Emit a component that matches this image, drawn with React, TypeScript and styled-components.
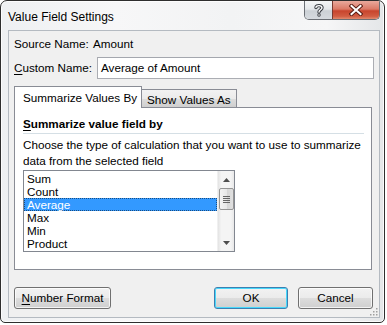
import React from "react";
import styled, { createGlobalStyle, css } from "styled-components";

const Global = createGlobalStyle`
  html, body { margin: 0; padding: 0; background: #ffffff; }
  body { font-family: "Liberation Sans", Arial, sans-serif; font-size: 11.7px; color: #000; }
  * { box-sizing: border-box; }
`;

const Window = styled.div`
  width: 385px;
  height: 323px;
  border: 1px solid #2e2e2e;
  border-radius: 7px 7px 5px 5px;
  background: linear-gradient(90deg, #eef0f2 0%, #f7f7f8 30%, #f2f3f4 60%, #f6f6f7 85%, #e4e6e8 100%);
  display: flex;
  flex-direction: column;
  overflow: hidden;
  box-shadow: inset 0 0 0 1px rgba(255, 255, 255, 0.8);
`;

const TitleBar = styled.div`
  height: 29px;
  display: flex;
  align-items: flex-start;
  padding-left: 7px;
  padding-right: 4px;
`;

const Title = styled.div`
  flex: 1;
  font-family: "Liberation Sans", Arial, sans-serif;
  font-size: 12px;
  line-height: 16px;
  margin-top: 8px;
  color: #000;
  text-shadow: 0 0 6px rgba(255, 255, 255, 0.9);
`;

const CaptionButtons = styled.div`
  display: flex;
  border: 1px solid #6b6f75;
  border-top: none;
  border-radius: 0 0 5px 5px;
  overflow: hidden;
  height: 19px;
`;

const CaptionButton = styled.div<{ $close?: boolean }>`
  height: 18px;
  display: flex;
  align-items: center;
  justify-content: center;
  ${(p) =>
    p.$close
      ? css`
          width: 47px;
          border-left: 1px solid #7a3a30;
          background: linear-gradient(180deg, #e9a99c 0%, #db7a67 45%, #c8442d 55%, #d15d42 85%, #e28a6e 100%);
        `
      : css`
          width: 27px;
          background: linear-gradient(180deg, #f4f5f6 0%, #e4e7ea 45%, #ccd1d6 55%, #d6dadf 100%);
        `}
`;

const Client = styled.div`
  margin-left: 7px;
  width: 372px;
  height: 288px;
  background: #f0f0f0;
  border: 1px solid #b4bac1;
  padding: 5px 0 0 5px;
  display: flex;
  flex-direction: column;
  position: relative;
`;

const Row = styled.div<{ $height: number; $mt?: number }>`
  display: flex;
  align-items: center;
  height: ${(p) => p.$height}px;
  margin-top: ${(p) => p.$mt ?? 0}px;
`;

const Label = styled.div<{ $w: number }>`
  width: ${(p) => p.$w}px;
  line-height: 16px;
  white-space: nowrap;
`;

const Value = styled.div`
  line-height: 16px;
`;

const Mnemonic = styled.span`
  text-decoration: underline;
  text-underline-offset: 2px;
`;

const Input = styled.div`
  width: 277px;
  height: 22px;
  border: 1px solid #abadb3;
  border-top-color: #a4a7ae;
  background: #fff;
  padding: 0 3px;
  line-height: 20px;
`;

const TabStrip = styled.div`
  display: flex;
  align-items: flex-end;
  height: 21px;
  margin-top: 7px;
`;

const Tab = styled.div<{ $active?: boolean }>`
  border: 1px solid #898c95;
  border-bottom: none;
  white-space: nowrap;
  ${(p) =>
    p.$active
      ? css`
          width: 128px;
          height: 22px;
          margin-bottom: -1px;
          background: #fff;
          padding: 4px 0 0 8px;
          position: relative;
          z-index: 1;
          line-height: 14px;
        `
      : css`
          width: 96px;
          height: 18px;
          margin-left: -1px;
          border-left: none;
          background: linear-gradient(180deg, #f2f2f2 0%, #ebebeb 50%, #dddddd 51%, #cfcfcf 100%);
          padding: 2px 0 0 6px;
          line-height: 15px;
        `}
`;

const Panel = styled.div`
  width: 358px;
  height: 163px;
  background: #fff;
  border: 1px solid #898c95;
  padding: 8px 6px 0 8px;
  display: flex;
  flex-direction: column;
`;

const Heading = styled.div`
  font-weight: bold;
  line-height: 16px;
  padding-bottom: 1px;
  border-bottom: 1px solid #d5dfe5;
  width: 341px;
`;

const Description = styled.div`
  margin-top: 3px;
  line-height: 16px;
  white-space: nowrap;
`;

const ListBox = styled.div`
  margin-top: 1px;
  width: 212px;
  height: 82px;
  border: 1px solid #828790;
  background: #fff;
  display: flex;
`;

const Items = styled.div`
  flex: 1;
  padding-top: 1px;
`;

const Item = styled.div<{ $selected?: boolean }>`
  height: 13px;
  line-height: 12px;
  padding-left: 2px;
  border: 1px solid transparent;
  ${(p) =>
    p.$selected &&
    css`
      background: #3399ff;
      color: #fff;
      border: 1px dotted #1a4d80;
    `}
`;

const ScrollBar = styled.div`
  width: 17px;
  background: linear-gradient(90deg, #e3e3e3 0%, #f4f4f4 20%, #f4f4f4 80%, #e8e8e8 100%);
  display: flex;
  flex-direction: column;
  align-items: center;
  border-left: 1px solid #f0f0f0;
`;

const Arrow = styled.div`
  height: 17px;
  width: 17px;
  display: flex;
  align-items: center;
  justify-content: center;
`;

const Thumb = styled.div`
  width: 15px;
  height: 22px;
  border: 1px solid #959595;
  border-radius: 2px;
  background: linear-gradient(90deg, #f3f3f3 0%, #e8e8e8 50%, #d6d6d6 51%, #e0e0e0 100%);
  display: flex;
  flex-direction: column;
  align-items: center;
  justify-content: center;
  gap: 1px;
`;

const Grip = styled.div`
  width: 7px;
  height: 1px;
  background: #666;
`;

const Track = styled.div`
  flex: 1;
`;

const ButtonRow = styled.div`
  display: flex;
  margin-top: 17px;
  height: 22px;
`;

const Button = styled.div<{ $w: number; $default?: boolean; $ml?: number }>`
  width: ${(p) => p.$w}px;
  height: 22px;
  margin-left: ${(p) => p.$ml ?? 0}px;
  border: 1px solid ${(p) => (p.$default ? "#3c7fb1" : "#707070")};
  border-radius: 3px;
  background: linear-gradient(180deg, #f2f2f2 0%, #ebebeb 50%, #dddddd 51%, #cfcfcf 100%);
  box-shadow: inset 0 0 0 1px ${(p) => (p.$default ? "#48d8fb" : "rgba(255,255,255,0.75)")};
  display: flex;
  align-items: center;
  justify-content: center;
  line-height: 16px;
  white-space: nowrap;
`;

const ResizeGrip = styled.svg`
  position: absolute;
  right: 1px;
  bottom: 1px;
`;

const items = ["Sum", "Count", "Average", "Max", "Min", "Product"];

export default function App() {
  return (
    <>
      <Global />
      <Window>
        <TitleBar>
          <Title>Value Field Settings</Title>
          <CaptionButtons>
            <CaptionButton>
              <svg width="12" height="14" viewBox="0 0 12 14">
                <path d="M3 4.5 C3 2 9 2 9 4.8 C9 6.8 6 6.8 6 9" fill="none" stroke="#3b3f45" strokeWidth="3.4" strokeLinecap="round" />
                <circle cx="6" cy="12" r="1.7" fill="#3b3f45" />
                <path d="M3 4.5 C3 2 9 2 9 4.8 C9 6.8 6 6.8 6 9" fill="none" stroke="#fff" strokeWidth="1.4" strokeLinecap="round" />
                <circle cx="6" cy="12" r="0.8" fill="#fff" />
              </svg>
            </CaptionButton>
            <CaptionButton $close>
              <svg width="14" height="12" viewBox="0 0 14 12">
                <path d="M2.5 2 L11.5 10 M11.5 2 L2.5 10" stroke="#5a1e14" strokeWidth="4" strokeLinecap="square" />
                <path d="M2.5 2 L11.5 10 M11.5 2 L2.5 10" stroke="#fff" strokeWidth="2" strokeLinecap="square" />
              </svg>
            </CaptionButton>
          </CaptionButtons>
        </TitleBar>
        <Client>
          <Row $height={16}>
            <Label $w={79}>Source Name:</Label>
            <Value>Amount</Value>
          </Row>
          <Row $height={22} $mt={5}>
            <Label $w={83}>
              <Mnemonic>C</Mnemonic>ustom Name:
            </Label>
            <Input>Average of Amount</Input>
          </Row>
          <TabStrip>
            <Tab $active>Summarize Values By</Tab>
            <Tab>Show Values As</Tab>
          </TabStrip>
          <Panel>
            <Heading>
              <Mnemonic>S</Mnemonic>ummarize value field by
            </Heading>
            <Description>
              Choose the type of calculation that you want to use to summarize
              <br />
              data from the selected field
            </Description>
            <ListBox>
              <Items>
                {items.map((it) => (
                  <Item key={it} $selected={it === "Average"}>
                    {it}
                  </Item>
                ))}
              </Items>
              <ScrollBar>
                <Arrow>
                  <svg width="7" height="4" viewBox="0 0 7 4">
                    <path d="M3.5 0 L7 4 L0 4 Z" fill="#4d4d4d" />
                  </svg>
                </Arrow>
                <Thumb>
                  <Grip />
                  <Grip />
                  <Grip />
                  <Grip />
                </Thumb>
                <Track />
                <Arrow>
                  <svg width="7" height="4" viewBox="0 0 7 4">
                    <path d="M0 0 L7 0 L3.5 4 Z" fill="#4d4d4d" />
                  </svg>
                </Arrow>
              </ScrollBar>
            </ListBox>
          </Panel>
          <ButtonRow>
            <Button $w={97}>
              <span>
                <Mnemonic>N</Mnemonic>umber Format
              </span>
            </Button>
            <Button $w={74} $ml={103} $default>
              OK
            </Button>
            <Button $w={75} $ml={10}>
              Cancel
            </Button>
          </ButtonRow>
          <ResizeGrip width="8" height="8" viewBox="0 0 8 8">
            <g fill="#a0a0a0">
              <rect x="6" y="0" width="1.5" height="1.5" />
              <rect x="3" y="3" width="1.5" height="1.5" />
              <rect x="6" y="3" width="1.5" height="1.5" />
              <rect x="0" y="6" width="1.5" height="1.5" />
              <rect x="3" y="6" width="1.5" height="1.5" />
              <rect x="6" y="6" width="1.5" height="1.5" />
            </g>
          </ResizeGrip>
        </Client>
      </Window>
    </>
  );
}
